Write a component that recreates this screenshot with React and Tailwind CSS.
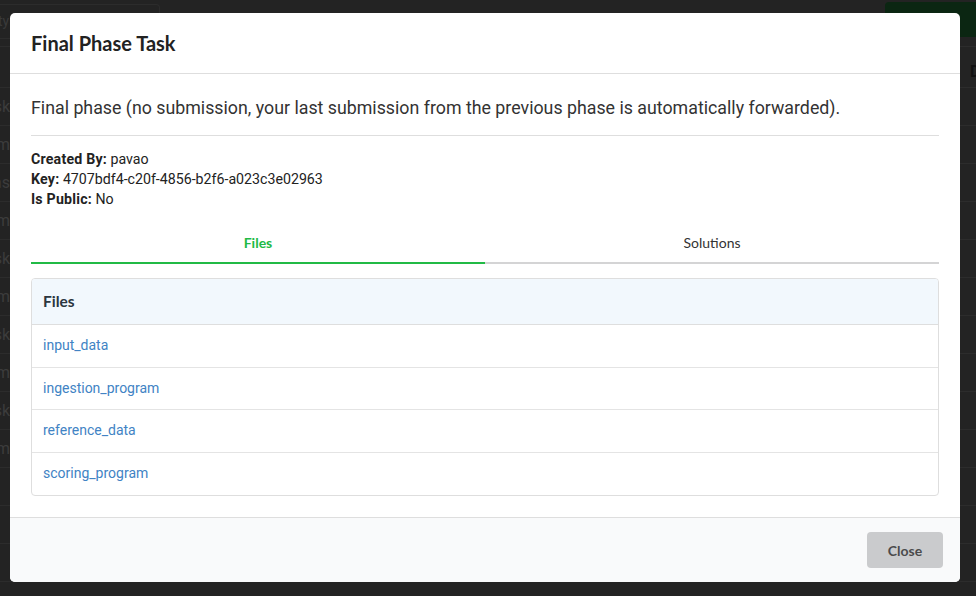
import React from "react";

const bgRows = ["", "sk", "m", "as", "m", "sk", "m", "sk", "m", "sk", "m", "", "", ""];

export default function App() {
  const files = ["input_data", "ingestion_program", "reference_data", "scoring_program"];
  return (
    <div className="relative w-[976px] h-[596px] overflow-hidden bg-[#232323]" style={{ fontFamily: "Roboto, 'Liberation Sans', sans-serif" }}>
      {/* dimmed page behind */}
      <div className="flex flex-col">
        <div className="flex items-center justify-between h-[40px] pt-[2px]">
          <div className="w-[160px] h-[35px] border border-[#2c2c2c] rounded-r-[4px] border-l-0 text-[#3a3a3a] text-[14px] flex items-center">
            <span className="-ml-[2px]">ty</span>
          </div>
          <div className="w-[91px] h-[35px] bg-[#0b2612] rounded-l-[4px] flex items-center pl-[8px] text-[#1c3d24] text-[14px] font-bold self-start" style={{ fontFamily: "Lato, sans-serif" }}>
            Create
          </div>
        </div>
        <div className="flex flex-col border-t border-[#2c2c2c] mt-[6px]">
          {bgRows.map((t, i) => (
            <div key={i} className={(i === 0 ? "h-[41px] pt-[10px] " : "h-[38px] ") + "border-b border-[#2c2c2c] flex items-center justify-between text-[16px] text-[#3c3c3c]"}>
              <div className="w-[10px] overflow-hidden flex justify-end">
                <span className="whitespace-nowrap">{t}</span>
              </div>
              <div className="w-[6px] overflow-hidden">
                <span className="text-[#111] font-bold">{i === 0 ? "D" : ""}</span>
              </div>
            </div>
          ))}
        </div>
      </div>

      {/* modal */}
      <div className="absolute left-[10px] top-[13px] w-[950px] h-[569px] bg-white rounded-[5px] flex flex-col overflow-hidden">
        <div className="h-[61px] px-[21px] flex items-center border-b border-[#dedede]">
          <h1 className="text-[20px] font-bold text-[#222]" style={{ fontFamily: "Lato, sans-serif" }}>
            Final Phase Task
          </h1>
        </div>
        <div className="flex-1 px-[21px] pt-[21px]">
          <p className="text-[17.8px] leading-[26px] text-[#333]">
            Final phase (no submission, your last submission from the previous phase is automatically forwarded).
          </p>
          <div className="mt-[14px] border-t border-[#dedede]"></div>
          <div className="mt-[13px] text-[14.2px] leading-[20px] text-[#222]">
            <div><span className="font-bold tracking-[0.2px]">Created By:</span> pavao</div>
            <div><span className="font-bold tracking-[0.2px]">Key:</span> 4707bdf4-c20f-4856-b2f6-a023c3e02963</div>
            <div><span className="font-bold tracking-[0.2px]">Is Public:</span> No</div>
          </div>
          <div className="mt-[15px] flex text-[14px] leading-[20px]" style={{ fontFamily: "Lato, sans-serif" }}>
            <div className="flex-1 text-center py-[9px] border-b-2 border-[#21ba45] text-[#21ba45] font-bold">Files</div>
            <div className="flex-1 text-center py-[9px] border-b-2 border-[#d4d4d5] text-[#333]">Solutions</div>
          </div>
          <div className="mt-[14px] border border-[#dedede] rounded-[4px] overflow-hidden">
            <div className="h-[46px] bg-[#f2f8fd] border-b border-[#dedede] px-[11px] flex items-center text-[15.5px] font-bold text-[#2b3640]" style={{ fontFamily: "Lato, sans-serif" }}>
              Files
            </div>
            {files.map((f, i) => (
              <div key={f} className={"h-[42.5px] px-[11px] flex items-center text-[14px] text-[#4183c4] " + (i < files.length - 1 ? "border-b border-[#e4e4e4]" : "")}>
                {f}
              </div>
            ))}
          </div>
        </div>
        <div className="h-[65px] bg-[#f9fafb] border-t border-[#dedede] flex items-start justify-end pt-[14px] pr-[17px]">
          <button className="w-[76px] h-[36px] bg-[#cacbcd] rounded-[4px] text-[14px] font-bold text-[#4b4b4c]" style={{ fontFamily: "Lato, sans-serif" }}>
            Close
          </button>
        </div>
      </div>
    </div>
  );
}
